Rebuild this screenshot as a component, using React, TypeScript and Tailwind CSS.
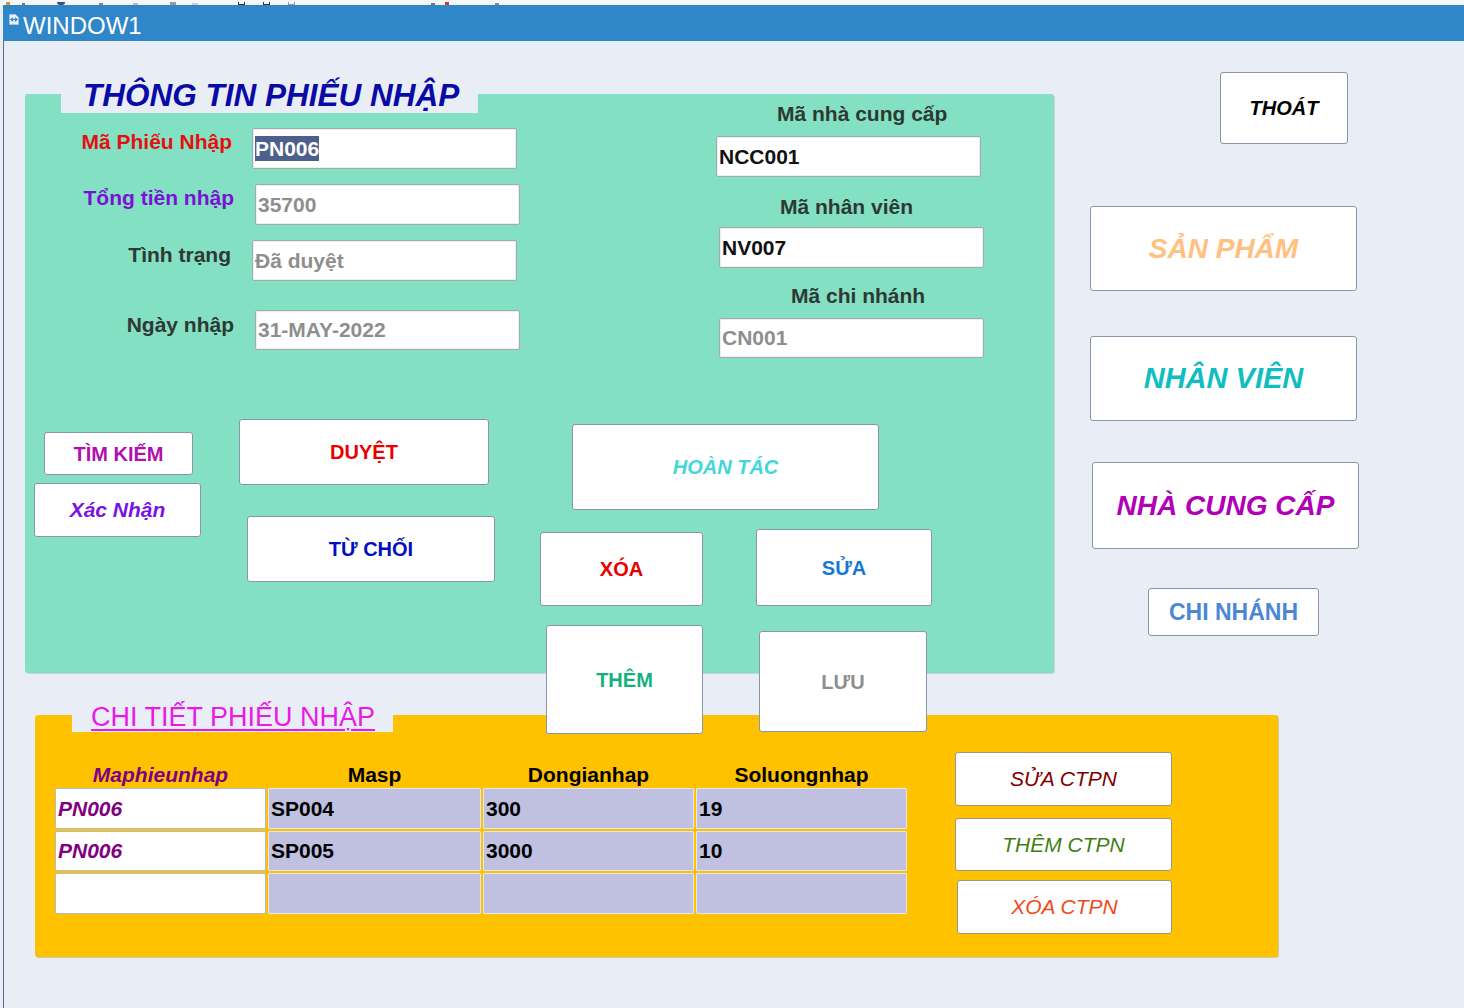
import type { ReactNode } from "react";

type BtnProps = {
  pos: string;
  tone: string;
  children: ReactNode;
  edge?: string;
};

function Btn({ pos, tone, children, edge = "border-[#8a96a8]" }: BtnProps) {
  return (
    <button
      type="button"
      className={`absolute ${pos} z-10 flex items-center justify-center whitespace-nowrap rounded-[3px] border ${edge} bg-white ${tone}`}
    >
      {children}
    </button>
  );
}

function Field({ pos, tone, children }: { pos: string; tone: string; children: ReactNode }) {
  return (
    <div
      className={`absolute ${pos} flex items-center whitespace-nowrap rounded-[2px] border border-[#a6aab0] bg-white pl-[2px] text-[21px] font-bold shadow-[inset_0_0_0_1px_#eceef1] ${tone}`}
    >
      {children}
    </div>
  );
}

function Label({ pos, tone, children }: { pos: string; tone: string; children: ReactNode }) {
  return (
    <div className={`absolute ${pos} h-[30px] whitespace-nowrap text-[21px] font-bold leading-[30px] ${tone}`}>
      {children}
    </div>
  );
}

const rows = [
  ["PN006", "SP004", "300", "19"],
  ["PN006", "SP005", "3000", "10"],
  ["", "", "", ""],
];

export default function App() {
  return (
    <div className="flex h-[1008px] w-[1464px] flex-col overflow-hidden bg-[#e9eef6] font-['Liberation_Sans',Arial,sans-serif]">
      {/* toolbar edge, mostly cut off */}
      <div className="flex h-[5px] items-end gap-[6px] bg-[#f6f6f6] pl-[6px]">
        <span className="h-[3px] w-[4px] bg-[#e0902a]" />
        <span className="ml-[6px] h-[2px] w-[3px] bg-[#777]" />
        <span className="ml-[26px] h-[3px] w-[8px] rounded-b-full bg-[#3b4f7a]" />
        <span className="ml-[28px] h-[2px] w-[4px] bg-[#888]" />
        <span className="ml-[24px] h-[2px] w-[5px] bg-[#bbb]" />
        <span className="ml-[26px] h-[3px] w-[6px] bg-[#999]" />
        <span className="ml-[10px] h-[2px] w-[6px] bg-[#ccc]" />
        <span className="ml-[34px] h-[3px] w-[7px] border-x border-b border-[#333]" />
        <span className="ml-[12px] h-[3px] w-[7px] border-x border-b border-[#333]" />
        <span className="ml-[12px] h-[3px] w-[7px] border-x border-b border-[#999]" />
        <span className="ml-[130px] h-[2px] w-[4px] bg-[#777]" />
        <span className="ml-[4px] h-[3px] w-[4px] bg-[#d33]" />
        <span className="ml-[40px] h-[2px] w-[4px] bg-[#888]" />
      </div>

      <div className="ml-[3px] flex flex-1 flex-col">
        {/* title bar */}
        <div className="flex h-[36px] items-center gap-[4px] bg-[#2f86c8] pl-[6px] pt-[5px] text-[24px] leading-none text-white">
          <svg width="10" height="11" viewBox="0 0 10 11" className="-mt-[12px]">
            <path d="M0.5 0.5h6l3 3v7h-9z" fill="#eaf2fb" stroke="#9cc3e6" />
            <path d="M2 5.5h6M6 3.8l2 1.7-2 1.7M4 3.8L2 5.5l2 1.7" stroke="#2f86c8" strokeWidth="1.2" fill="none" />
          </svg>
          <span>WINDOW1</span>
        </div>

        {/* form canvas */}
        <div className="relative flex-1 border-l border-[#5b6a86]">
          {/* THÔNG TIN PHIẾU NHẬP block */}
          <div className="absolute left-[21px] top-[53px] h-[579px] w-[1029px] rounded-[3px] bg-[#84e0c2] shadow-[1px_1px_0_#c6d3d8]" />
          <div className="absolute left-[57px] top-[29px] h-[43px] w-[417px] bg-[#e9eef6] pl-[22px] text-[31.5px] font-bold italic leading-[50px] text-[#0a0aa6]">
            THÔNG TIN PHIẾU NHẬP
          </div>

          <Label pos="left-[40px] top-[86px] w-[188px] text-right" tone="text-[#e41010]">Mã Phiếu Nhập</Label>
          <Label pos="left-[40px] top-[142px] w-[190px] text-right" tone="text-[#7a12d6]">Tổng tiền nhập</Label>
          <Label pos="left-[40px] top-[199px] w-[187px] text-right" tone="text-[#2e3834]">Tình trạng</Label>
          <Label pos="left-[40px] top-[269px] w-[190px] text-right" tone="text-[#2e3834]">Ngày nhập</Label>

          <Field pos="left-[248px] top-[87px] h-[41px] w-[265px]" tone="text-white">
            <span className="bg-[#4d5f8c] leading-[25px]">PN006</span>
          </Field>
          <Field pos="left-[251px] top-[143px] h-[41px] w-[265px]" tone="text-[#8e8e8e]">35700</Field>
          <Field pos="left-[248px] top-[199px] h-[41px] w-[265px]" tone="text-[#8e8e8e]">Đã duyệt</Field>
          <Field pos="left-[251px] top-[269px] h-[40px] w-[265px]" tone="text-[#8e8e8e]">31-MAY-2022</Field>

          <Label pos="left-[773px] top-[58px]" tone="text-[#2e3834]">Mã nhà cung cấp</Label>
          <Label pos="left-[776px] top-[151px]" tone="text-[#2e3834]">Mã nhân viên</Label>
          <Label pos="left-[787px] top-[240px]" tone="text-[#2e3834]">Mã chi nhánh</Label>

          <Field pos="left-[712px] top-[95px] h-[41px] w-[265px]" tone="text-[#111]">NCC001</Field>
          <Field pos="left-[715px] top-[186px] h-[41px] w-[265px]" tone="text-[#111]">NV007</Field>
          <Field pos="left-[715px] top-[277px] h-[40px] w-[265px]" tone="text-[#8e8e8e]">CN001</Field>

          <Btn pos="left-[40px] top-[391px] h-[43px] w-[149px]" tone="text-[20px] font-bold text-[#b010b0]">TÌM KIẾM</Btn>
          <Btn pos="left-[30px] top-[442px] h-[54px] w-[167px]" tone="text-[21px] font-bold italic text-[#7a12e6]">Xác Nhận</Btn>
          <Btn pos="left-[235px] top-[378px] h-[66px] w-[250px]" tone="text-[20px] font-bold text-[#e80000]">DUYỆT</Btn>
          <Btn pos="left-[243px] top-[475px] h-[66px] w-[248px]" tone="text-[20px] font-bold text-[#0010c0]">TỪ CHỐI</Btn>
          <Btn pos="left-[568px] top-[383px] h-[86px] w-[307px]" tone="text-[20px] font-bold italic text-[#44d6da]">HOÀN TÁC</Btn>
          <Btn pos="left-[536px] top-[491px] h-[74px] w-[163px]" tone="text-[20px] font-bold text-[#e80000]">XÓA</Btn>
          <Btn pos="left-[752px] top-[488px] h-[77px] w-[176px]" tone="text-[20px] font-bold text-[#1678d6]">SỬA</Btn>
          <Btn pos="left-[542px] top-[584px] h-[109px] w-[157px]" tone="text-[20px] font-bold text-[#12b27e]">THÊM</Btn>
          <Btn pos="left-[755px] top-[590px] h-[101px] w-[168px]" tone="text-[20px] font-bold text-[#8e8e8e]">LƯU</Btn>

          {/* navigation */}
          <Btn pos="left-[1216px] top-[31px] h-[72px] w-[128px]" tone="text-[20px] font-bold italic text-black">THOÁT</Btn>
          <Btn pos="left-[1086px] top-[165px] h-[85px] w-[267px]" tone="text-[28px] font-bold italic text-[#ffc080]">SẢN PHẨM</Btn>
          <Btn pos="left-[1086px] top-[295px] h-[85px] w-[267px]" tone="text-[29px] font-bold italic text-[#10bec2]">NHÂN VIÊN</Btn>
          <Btn pos="left-[1088px] top-[421px] h-[87px] w-[267px]" tone="text-[28px] font-bold italic text-[#b000b8]">NHÀ CUNG CẤP</Btn>
          <Btn pos="left-[1144px] top-[547px] h-[48px] w-[171px]" tone="text-[23px] font-bold text-[#4a88d6]">CHI NHÁNH</Btn>

          {/* CHI TIẾT PHIẾU NHẬP block */}
          <div className="absolute left-[31px] top-[674px] h-[242px] w-[1243px] rounded-[3px] bg-[#ffc200] shadow-[1px_1px_0_#cfc9a8]" />
          <div className="absolute left-[68px] top-[658px] h-[33px] w-[321px] bg-[#e9eef6] pl-[19px] text-[27px] leading-[36px] text-[#e81ae8] underline decoration-[1.5px] underline-offset-[3px]">
            CHI TIẾT PHIẾU NHẬP
          </div>

          <div className="absolute left-[51px] top-[720px] w-[852px]">
            <div className="grid h-[27px] grid-cols-[211px_213px_211px_211px] items-center gap-x-[2px] text-center text-[21px] font-bold leading-none">
              <span className="italic text-[#800080]">Maphieunhap</span>
              <span className="text-black">Masp</span>
              <span className="text-black">Dongianhap</span>
              <span className="text-black">Soluongnhap</span>
            </div>
            <div className="grid grid-cols-[211px_213px_211px_211px] grid-rows-[41px_40px_41px] gap-[2px] text-[21px] font-bold">
              {rows.map((row, r) =>
                row.map((cell, c) => (
                  <div
                    key={`${r}-${c}`}
                    className={
                      c === 0
                        ? "flex items-center rounded-[2px] border border-[#b4bac6] bg-white pl-[2px] italic text-[#800080]"
                        : "flex items-center rounded-[1px] border border-[#e4e6f0] bg-[#c0c0e0] pl-[2px] text-black"
                    }
                  >
                    {cell}
                  </div>
                ))
              )}
            </div>
          </div>

          <Btn pos="left-[951px] top-[711px] h-[54px] w-[217px]" edge="border-[#a09680]" tone="text-[21px] italic text-[#800000]">SỬA CTPN</Btn>
          <Btn pos="left-[951px] top-[777px] h-[53px] w-[217px]" edge="border-[#a09680]" tone="text-[21px] italic text-[#3f7f12]">THÊM CTPN</Btn>
          <Btn pos="left-[953px] top-[839px] h-[54px] w-[215px]" edge="border-[#a09680]" tone="text-[21px] italic text-[#f04a1a]">XÓA CTPN</Btn>
        </div>
      </div>
    </div>
  );
}
